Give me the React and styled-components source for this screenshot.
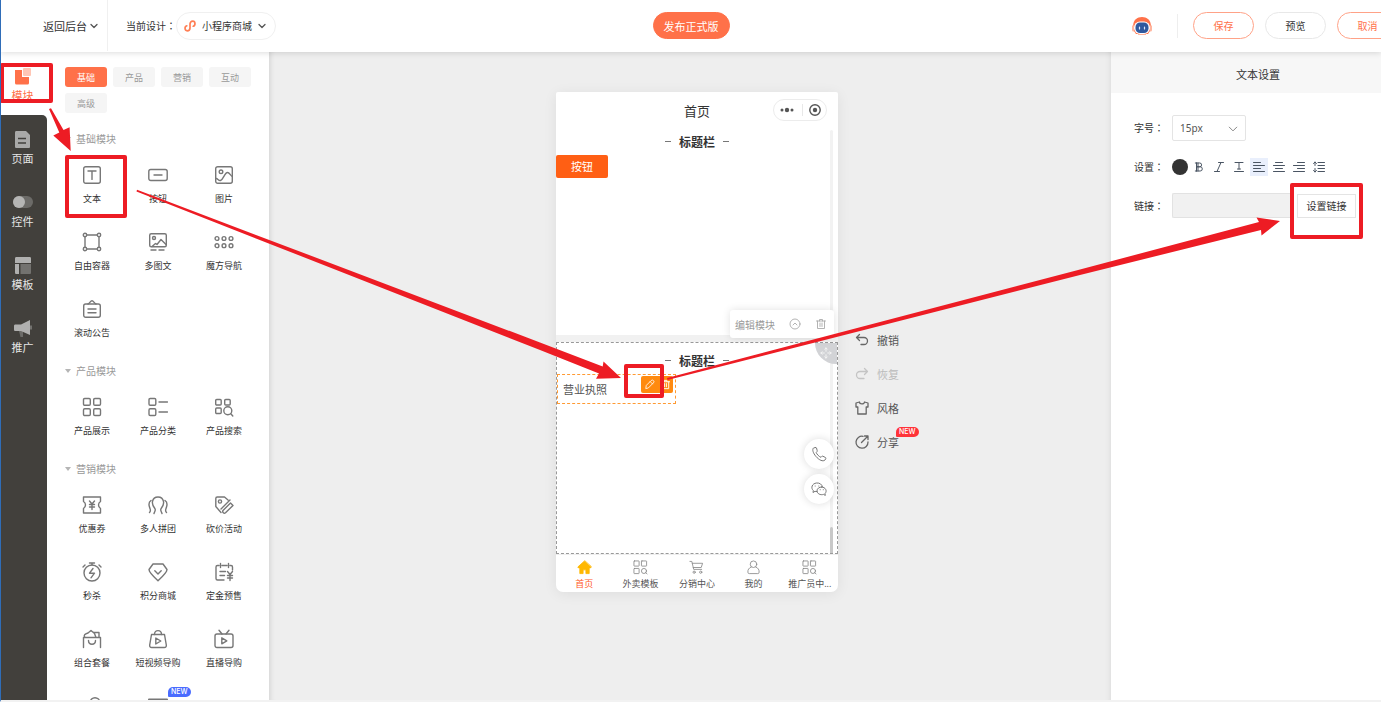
import React from "react";
import styled, { createGlobalStyle, css } from "styled-components";

const ACCENT = "#ff7149";
const MARK = "#ed1c24";

const Global = createGlobalStyle`
  *, *::before, *::after { box-sizing: border-box; }
  html, body { margin: 0; padding: 0; }
  body {
    font-family: "Noto Sans", "Noto Sans CJK SC", sans-serif;
    font-size: 10px;
    color: #333;
    overflow: hidden;
  }
  button, input, select { font: inherit; color: inherit; margin: 0; }
  button { padding: 0; border: 0; background: none; cursor: pointer; white-space: nowrap; }
  a { color: inherit; text-decoration: none; }
  svg { display: block; flex: none; }
`;

/* ---------- page frame ---------- */

const Page = styled.div`
  position: relative;
  display: flex;
  flex-direction: column;
  height: 100vh;
  overflow: hidden;
  border-left: 1px solid #2f6db8;
  border-bottom: 2px solid #f2f2f2;
  background: #fff;
`;

const Header = styled.header`
  position: relative;
  z-index: 2;
  flex: none;
  display: grid;
  grid-template-columns: 1fr auto 1fr;
  align-items: center;
  height: 52px;
  padding-bottom: 1px;
  background: #fff;
  box-shadow: 0 1px 6px rgba(0, 0, 0, 0.14);
`;

const HeaderLeft = styled.div`
  display: flex;
  align-items: center;
  height: 51px;
`;

const BackLink = styled.a`
  display: flex;
  align-items: center;
  gap: 3px;
  height: 100%;
  padding: 0 9px 0 42px;
  border-right: 1px solid #f0f0f0;
  font-size: 11px;
`;

const DesignLabel = styled.span`
  padding-left: 18px;
`;

const Colon = styled.span`
  font-family: "Noto Sans CJK TC", sans-serif;
`;

const DesignPill = styled.button`
  display: flex;
  align-items: center;
  gap: 6px;
  height: 28px;
  padding: 0 9px 0 7px;
  border: 1px solid #f0f0f0;
  border-radius: 14px;
`;

const PillButton = styled.button`
  flex: none;
  width: ${(p) => p.$width}px;
  height: 27px;
  border-radius: 14px;
  border: 1px solid #e8e8e8;
  background: #fff;
  ${(p) =>
    p.$tone === "outline" &&
    css`
      border-color: #ffa287;
      color: ${ACCENT};
    `}
  ${(p) =>
    p.$tone === "solid" &&
    css`
      border-color: ${ACCENT};
      background: ${ACCENT};
      color: #fff;
      font-size: 11px;
    `}
`;

const HeaderRight = styled.div`
  display: flex;
  align-items: center;
  justify-content: flex-end;
  gap: 11px;
  margin-right: -17px;
`;

const Divider = styled.span`
  width: 1px;
  height: 24px;
  margin: 0 4px 0 14px;
  background: #eee;
`;

const Body = styled.div`
  flex: 1;
  min-height: 0;
  display: flex;
`;

/* ---------- left rail ---------- */

const Rail = styled.nav`
  flex: none;
  width: 46px;
  display: flex;
  flex-direction: column;
  background: #fff;
`;

const RailRest = styled.div`
  flex: 1;
  background: #42403c;
  border-top-right-radius: 5px;
`;

const RailButton = styled.button`
  display: flex;
  flex-direction: column;
  align-items: center;
  gap: 3px;
  width: 43px;
  height: 63px;
  padding-top: 15px;
  font-size: 11px;
  line-height: 16px;
  color: ${(p) => (p.$active ? ACCENT : "#e6e6e6")};
`;

/* ---------- module panel ---------- */

const ModulePanel = styled.aside`
  flex: none;
  width: 222px;
  overflow: hidden;
  padding: 15px 12px 0;
  background: #fff;
`;

const Tabs = styled.div`
  display: flex;
  flex-wrap: wrap;
  gap: 6px;
  padding: 0 0 0 6px;
  margin-bottom: 11px;
`;

const Tab = styled.button`
  width: 42px;
  height: 20px;
  border-radius: 3px;
  font-size: 9px;
  color: ${(p) => (p.$active ? "#fff" : "#999")};
  background: ${(p) => (p.$active ? ACCENT : "#f5f5f5")};
`;

const GroupTitle = styled.h2`
  display: flex;
  align-items: center;
  gap: 5px;
  height: 31px;
  margin: 0;
  padding: 0 0 2px 6px;
  font-size: 10px;
  font-weight: 400;
  color: #999;
`;

const Caret = styled.span`
  border: 3px solid transparent;
  border-top: 4px solid #b5b5b5;
  border-bottom: 0;
`;

const ModuleGrid = styled.div`
  display: grid;
  grid-template-columns: repeat(3, 66px);
`;

const ModuleButton = styled.button`
  position: relative;
  display: flex;
  flex-direction: column;
  align-items: center;
  gap: 7px;
  height: 67px;
  padding-top: 10px;
  font-size: 9px;
  line-height: 14px;
  color: #333;
`;

const NewBadge = styled.span`
  position: absolute;
  top: ${(p) => p.$top}px;
  left: ${(p) => p.$left}px;
  height: 10px;
  padding: 0 3px;
  border-radius: 5px 5px 5px 1px;
  background: ${(p) => p.$color};
  color: #fff;
  font-family: Inter, sans-serif;
  font-size: 7px;
  font-weight: 500;
  line-height: 10px;
`;

/* ---------- canvas ---------- */

const Canvas = styled.main`
  flex: 1;
  min-width: 0;
  display: grid;
  grid-template-columns: 1fr 282px 1fr;
  align-items: start;
  padding: 40px 0 0 14px;
  background: #eee;
  box-shadow: inset 6px 0 6px -6px rgba(0, 0, 0, 0.16), inset -6px 0 6px -6px rgba(0, 0, 0, 0.1);
`;

const Phone = styled.section`
  position: relative;
  grid-column: 2;
  display: flex;
  flex-direction: column;
  border-radius: 2px 2px 7px 7px;
  background: #fff;
  box-shadow: 0 2px 14px rgba(0, 0, 0, 0.07);
`;

const PhoneBar = styled.div`
  display: grid;
  grid-template-columns: 1fr auto 1fr;
  align-items: center;
  height: 38px;
  padding: 0 11px 2px;
`;

const PhoneTitle = styled.h1`
  grid-column: 2;
  margin: 0;
  font-size: 13px;
  font-weight: 400;
`;

const Capsule = styled.div`
  justify-self: end;
  display: flex;
  align-items: center;
  justify-content: space-between;
  width: 54px;
  height: 22px;
  padding: 0 5px;
  border: 1px solid #ececec;
  border-radius: 11px;
`;

const CapsuleLine = styled.span`
  width: 1px;
  height: 12px;
  background: #e8e8e8;
`;

const Block = styled.div`
  position: relative;
  height: ${(p) => p.$height}px;
  ${(p) =>
    p.$selected &&
    css`
      padding-top: 6px;
      border: 1px dashed #999;
    `}
`;

const BlockGap = styled.div`
  height: 7px;
  background: #f1f1f1;
`;

const TitleRow = styled.h3`
  display: flex;
  align-items: center;
  justify-content: center;
  gap: 8px;
  height: 25px;
  margin: 0;
  padding-bottom: 2px;
  font-size: 12px;
  font-weight: 600;
  &::before,
  &::after {
    content: "";
    width: 6px;
    height: 1px;
    background: #777;
  }
`;

const DemoButton = styled.button`
  display: block;
  width: 52px;
  height: 23px;
  padding-bottom: 2px;
  border-radius: 2px;
  background: #ff5f14;
  color: #fff;
  font-size: 11px;
`;

const TextBox = styled.div`
  display: flex;
  align-items: flex-start;
  justify-content: space-between;
  width: 119px;
  height: 30px;
  padding: 1px 2px 0 5px;
  border: 1px dashed #ff9a33;
  font-size: 11px;
  line-height: 28px;
  color: #555;
`;

const TextTools = styled.div`
  display: flex;
  border-radius: 2px;
  background: #ff8a0f;
`;

const TextTool = styled.button`
  display: grid;
  place-items: center;
  width: 16px;
  height: 17px;
  color: #fff;
`;

const EditBar = styled.div`
  position: absolute;
  z-index: 1;
  top: 218px;
  right: 4px;
  display: flex;
  align-items: center;
  gap: 14px;
  height: 28px;
  padding: 0 7px 0 5px;
  border-radius: 3px;
  background: #fff;
  color: #999;
  box-shadow: 0 0 8px rgba(0, 0, 0, 0.12);
`;

const MoveHandle = styled.span`
  position: absolute;
  top: 0;
  right: 0;
  display: grid;
  place-items: center;
  width: 22px;
  height: 21px;
  padding-bottom: 2px;
  border-bottom-left-radius: 21px;
  background: #d2d3d6;
`;

const ScrollTrack = styled.span`
  position: absolute;
  top: 38px;
  bottom: 38px;
  right: 5px;
  width: 3px;
  border-radius: 2px;
  background: #f2f2f2;
  &::after {
    content: "";
    position: absolute;
    inset: auto 0 0 0;
    height: 27px;
    border-radius: 2px;
    background: #c8c8c8;
  }
`;

const FloatStack = styled.div`
  position: absolute;
  top: 347px;
  right: 4px;
  display: flex;
  flex-direction: column;
  gap: 5px;
`;

const FloatButton = styled.button`
  display: grid;
  place-items: center;
  width: 30px;
  height: 30px;
  border-radius: 50%;
  background: #fff;
  box-shadow: 0 0 8px rgba(0, 0, 0, 0.14);
`;

const TabBar = styled.nav`
  display: grid;
  grid-template-columns: repeat(5, 1fr);
  height: 38px;
  border-top: 1px solid #eee;
`;

const TabBarItem = styled.a`
  display: flex;
  flex-direction: column;
  align-items: center;
  gap: 2px;
  padding-top: 5px;
  font-size: 9px;
  line-height: 14px;
  white-space: nowrap;
  color: ${(p) => (p.$active ? "#ff5a1f" : "#555")};
`;

const ToolList = styled.div`
  display: flex;
  flex-direction: column;
  align-items: flex-start;
  gap: 10px;
  padding: 236px 0 0 17px;
`;

const ToolButton = styled.button`
  position: relative;
  display: flex;
  align-items: center;
  gap: 8px;
  height: 24px;
  font-size: 11px;
  color: ${(p) => (p.disabled ? "#bbb" : "#555")};
`;

/* ---------- settings ---------- */

const Settings = styled.aside`
  flex: none;
  width: 270px;
  background: #fff;
`;

const SettingsTitle = styled.h2`
  display: flex;
  align-items: center;
  justify-content: center;
  height: 41px;
  margin: 0;
  padding: 2px 0 0 24px;
  background: #f7f7f7;
  font-size: 11px;
  font-weight: 400;
`;

const SettingsForm = styled.form`
  display: flex;
  flex-direction: column;
  gap: 14px;
  padding: 22px 0 0 23px;
`;

const Field = styled.div`
  display: flex;
  align-items: center;
  height: 25px;
`;

const FieldLabel = styled.label`
  flex: none;
  width: 38px;
`;

const SelectWrap = styled.div`
  position: relative;
  width: 74px;
  height: 26px;
  svg {
    position: absolute;
    top: 9px;
    right: 8px;
    pointer-events: none;
  }
`;

const SizeSelect = styled.select`
  appearance: none;
  width: 100%;
  height: 100%;
  padding: 0 0 0 7px;
  border: 1px solid #e4e4e4;
  border-radius: 2px;
  background: #fff;
  font-size: 10px;
  color: #555;
`;

const Swatch = styled.button`
  width: 16px;
  height: 16px;
  margin-right: 2px;
  border-radius: 50%;
  background: #333;
`;

const FormatButton = styled.button`
  display: grid;
  place-items: center;
  width: 18px;
  height: 18px;
  margin-right: 2px;
  color: #4a5563;
  background: ${(p) => (p.$active ? "#e9effc" : "transparent")};
`;

const LinkInput = styled.input`
  width: 118px;
  height: 25px;
  border: 1px solid #e2e2e2;
  border-right: 0;
  border-radius: 2px 0 0 2px;
  background: #f1f1f1;
`;

const LinkButton = styled.button`
  width: 59px;
  height: 24px;
  margin-left: 7px;
  border: 1px solid #e4e4e4;
  background: #fff;
`;

const Annotations = styled.svg`
  position: absolute;
  z-index: 3;
  top: 0;
  left: -1px;
  pointer-events: none;
`;

/* ---------- icons ---------- */

const Line = ({ size = 20, box = 20, width = 1.4, color = "#777", children }) => (
  <svg
    width={size}
    height={size}
    viewBox={`0 0 ${box} ${box}`}
    fill="none"
    stroke={color}
    strokeWidth={width}
    strokeLinecap="round"
    strokeLinejoin="round"
    aria-hidden="true"
  >
    {children}
  </svg>
);

const Chevron = ({ size = 8, color = "#555", width = 1.3 }) => (
  <Line size={size} box={8} width={width} color={color}>
    <path d="M1 2.5 4 5.5 7 2.5" />
  </Line>
);

const moduleIcons = {
  text: (
    <>
      <rect x="1.7" y="1.7" width="16.6" height="16.6" rx="2" />
      <path d="M6 6h8M10 6v8.4" />
    </>
  ),
  button: (
    <>
      <rect x="0.8" y="4.5" width="18.4" height="11" rx="2" />
      <path d="M6 10h8" />
    </>
  ),
  image: (
    <>
      <rect x="1.7" y="1.7" width="16.6" height="16.6" rx="2" />
      <circle cx="7" cy="6.8" r="1.8" />
      <path d="M2 13.500c1.500-.500 2.500 2.500 4.500 2 3-.800 4-8 7-8 2 0 3 3 4.800 4" />
    </>
  ),
  container: (
    <>
      <path d="M4.800 3h10.400M4.800 17h10.400M3 4.800v10.400M17 4.800v10.400" />
      <circle cx="3" cy="3" r="1.700" />
      <circle cx="17" cy="3" r="1.700" />
      <circle cx="3" cy="17" r="1.700" />
      <circle cx="17" cy="17" r="1.700" />
    </>
  ),
  multi: (
    <>
      <rect x="1.700" y="1.700" width="16.600" height="13" rx="1.500" />
      <circle cx="6" cy="6" r="1.500" />
      <path d="M4 14.500 7.500 11.500 9 12.500 13 7.500 18 12.500M3 18h5M11 18h5" />
    </>
  ),
  dots: (
    <>
      {[3, 10, 17].map((x) => (
        <React.Fragment key={x}>
          <circle cx={x} cy="6.500" r="1.900" />
          <circle cx={x} cy="13.700" r="1.900" />
        </React.Fragment>
      ))}
    </>
  ),
  notice: (
    <>
      <rect x="1.700" y="5" width="16.600" height="13.300" rx="2" />
      <path d="M6 5c1.500-.500 2.500-3.300 4-3.300S12.500 4.500 14 5M6 10h8M6 13.700h8" />
    </>
  ),
  grid: (
    <>
      <rect x="1.500" y="1.500" width="6.800" height="6.800" rx="1.200" />
      <rect x="11.700" y="1.500" width="6.800" height="6.800" rx="1.200" />
      <rect x="1.500" y="11.700" width="6.800" height="6.800" rx="1.200" />
      <rect x="11.700" y="11.700" width="6.800" height="6.800" rx="1.200" />
    </>
  ),
  list: (
    <>
      <rect x="1" y="1.500" width="6.800" height="6.800" rx="1.200" />
      <rect x="1" y="11.700" width="6.800" height="6.800" rx="1.200" />
      <path d="M11 5h8.500M11 15h8.500" />
    </>
  ),
  search: (
    <>
      <rect x="1.700" y="2.500" width="5.500" height="5.500" rx="1" />
      <rect x="10.700" y="2.500" width="5.500" height="5.500" rx="1" />
      <rect x="1.700" y="11" width="5.500" height="5.500" rx="1" />
      <circle cx="13.800" cy="13.800" r="4" />
      <path d="M16.800 16.800 18.800 19" />
    </>
  ),
  coupon: (
    <>
      <path d="M1.500 2h17v4.500c-1.500 1-2 2-2 3.500s.500 2.500 2 3.500V18h-17v-4.500c1.500-1 2-2 2-3.500s-.500-2.500-2-3.500Z" />
      <path d="m7.500 6 2.500 3 2.500-3M10 9v5.500M7.500 9.500h5M7.500 12h5" />
    </>
  ),
  group: (
    <>
      <path d="M6 18.500c.500-2 2-2.800 1-4.800C4.800 11 4 9 4.500 6.500a5.600 5.600 0 0 1 11 0c.500 2.500-.300 4.500-2.500 7.200-1 2 .500 2.800 1 4.800" />
      <path d="M1.500 17.500c2-2 .500-3.500 0-5.500-1-3 0-5.500 1.500-6.500M18.500 17.500c-2-2-.500-3.500 0-5.500 1-3 0-5.500-1.500-6.500" />
    </>
  ),
  bargain: (
    <>
      <path d="M7 17.500 1.800 11.500V3.500c0-1 .700-1.500 1.500-1.500h7.200L14 5M7 14 16 5" />
      <circle cx="6" cy="6.500" r="1.600" />
      <path d="M9 15.500c-1 1.500 1 3.500 2.500 2.200L19 10.500 16.500 8Z" />
    </>
  ),
  flash: (
    <>
      <circle cx="10" cy="11" r="8" />
      <path d="M7.500 1h5M10 1v2M1 5l2-2M19 5l-2-2M11 6.500 7.500 11.200h5L9 15.800" />
    </>
  ),
  points: (
    <>
      <path d="M5 2h10l4 5.500c0 3-6 8.500-9 11.300C7 16 1 10.500 1 7.500Z" />
      <path d="M6.800 8.800 10 12l3.200-3.200" />
    </>
  ),
  deposit: (
    <>
      <path d="M10 18H3.500C2.500 18 2 17.500 2 16.500V5c0-1 .500-1.500 1.500-1.500H5M8 3.500h5M16 3.500h1c1 0 1.500.500 1.500 1.500v3M6.500 1.500v4M14.500 1.500v4M6 9.500h5.500M6 13.500h4.500" />
      <path d="m13.500 9.500 2.500 3 2.500-3M16 12.500v6M13.500 13.500h5M13.500 16h5" />
    </>
  ),
  combo: (
    <>
      <path d="M1.500 18.500v-10h17v10M3 8.500C1 6 3 5 6 4l3-2.500 3.500 3L14 8.500M11.500 3.500H17v5" />
      <path d="M6.500 11.500c0 5 7 5 7 0" />
    </>
  ),
  video: (
    <>
      <path d="M3.500 5.500h13L18.300 16c.200 1.500-.500 2.500-2 2.500H3.700c-1.500 0-2.200-1-2-2.500Z" />
      <path d="M6.500 5.500C6.500.300 13.500.300 13.500 5.500M7.800 9v6l5-3Z" />
    </>
  ),
  live: (
    <>
      <rect x="1" y="5" width="18" height="13.500" rx="2" />
      <path d="M5 1.200 8 5M15 1.200 12 5M7.800 8.800v6l5-3Z" />
    </>
  ),
  person: <circle cx="13" cy="6.500" r="4.800" />,
  card: <path d="M1 3.500h18v14H1Z" strokeWidth="2" />,
};

const groups = [
  {
    title: "基础模块",
    items: [
      ["text", "文本"],
      ["button", "按钮"],
      ["image", "图片"],
      ["container", "自由容器"],
      ["multi", "多图文"],
      ["dots", "魔方导航"],
      ["notice", "滚动公告"],
    ],
  },
  {
    title: "产品模块",
    items: [
      ["grid", "产品展示"],
      ["list", "产品分类"],
      ["search", "产品搜索"],
    ],
  },
  {
    title: "营销模块",
    items: [
      ["coupon", "优惠券"],
      ["group", "多人拼团"],
      ["bargain", "砍价活动"],
      ["flash", "秒杀"],
      ["points", "积分商城"],
      ["deposit", "定金预售"],
      ["combo", "组合套餐"],
      ["video", "短视频导购"],
      ["live", "直播导购"],
      ["person", ""],
      ["card", "", true],
    ],
  },
];

const railIcons = {
  模块: (
    <>
      <path d="M1 3h7v7h7v6a1.500 1.500 0 0 1-1.500 1.500h-11A1.500 1.500 0 0 1 1 16Z" fill={ACCENT} />
      <rect x="9" y="1" width="8" height="8" rx="1" fill="#ffc6b5" />
    </>
  ),
  页面: (
    <>
      <path d="M1 2.500C1 1.500 1.500 1 2.500 1H12l4 4v11.500c0 1-.500 1.500-1.500 1.500h-12C1.500 18 1 17.500 1 16.500Z" fill="#a9a9a8" />
      <path d="M4 8.500h8M4 13h8" stroke="#42403c" strokeWidth="1.600" />
    </>
  ),
  控件: (
    <>
      <rect x="-1" y="3" width="20" height="12" rx="6" fill="#6c6b68" />
      <circle cx="5" cy="9" r="6" fill="#b5b5b4" />
    </>
  ),
  模板: (
    <>
      <path d="M1 2.500C1 1.500 1.500 1 2.500 1h13c1 0 1.500.500 1.500 1.500V7H1Z" fill="#b0b0af" />
      <path d="M1 8h4v10H2.500C1.500 18 1 17.500 1 16.500Z" fill="#b0b0af" />
      <path d="M6.500 8H17v8.500c0 1-.500 1.500-1.500 1.500h-9Z" fill="#73726f" />
    </>
  ),
  推广: (
    <>
      <path d="M5 12h4v6H6.500Z" fill="#6c6b68" />
      <path d="M0 7c0-1 .500-1.500 1.500-1.500H7L16 1v15l-9-4H1.500C.500 12 0 11.500 0 10.500Z" fill="#b0b0af" />
      <path d="M17 6.500v4" stroke="#73726f" strokeWidth="2" />
    </>
  ),
};

const RailItem = ({ name, active }) => (
  <RailButton $active={active}>
    <svg width="18" height="18" viewBox="0 0 18 18" fill="none" overflow="visible" aria-hidden="true">
      {railIcons[name]}
    </svg>
    {name}
  </RailButton>
);

const Robot = () => (
  <svg width="20" height="20" viewBox="0 0 20 20" aria-label="客服" role="img">
    <path d="M2 15C-1 6 4 1 10 1s11 5 8 14l-2 3H4Z" fill="#ff7149" />
    <path d="M0 9.500h2v6H1.500A1.500 1.500 0 0 1 0 14ZM20 9.500h-2v6h.500A1.500 1.500 0 0 0 20 14Z" fill="#ffb59e" />
    <rect x="2" y="5.500" width="16" height="12.500" rx="6" fill="#fff" />
    <rect x="3.500" y="6.500" width="13" height="10.500" rx="4.500" fill="#30599e" />
    <path d="M7.500 11v2M12.500 11v2" stroke="#dfe9fb" strokeWidth="1.200" strokeLinecap="round" />
    <path d="M6 18.500h8" stroke="#ffb59e" />
  </svg>
);

const MiniProgramLogo = () => (
  <Line size={12} box={12} width={1.7} color="#ff7f55">
    <path d="M2.800 5.800C.300 6.500.500 10.800 3.200 10.800 5 10.800 6 9.500 6 8V4C6 2.500 7 1.200 8.800 1.200c2.700 0 2.900 4.300.400 5" />
  </Line>
);

const Trash = ({ size, color, width = 1 }) => (
  <Line size={size} box={12} width={width} color={color}>
    <path d="M1.500 3h9M4.500 3V1.500h3V3M2.500 3v7.500h7V3M5 5v3.500M7 5v3.500" />
  </Line>
);

const tabBarIcons = {
  home: <path d="M8 1 .800 7.500l.800.900H3v6.100h3.500v-4h3v4H13V8.400h1.400l.800-.900Z" fill="#ffb800" stroke="#ffb800" />,
  blocks: (
    <>
      <rect x="1" y="1" width="5.500" height="5.500" rx=".5" />
      <rect x="9" y="1" width="5.500" height="5.500" rx=".5" />
      <rect x="1" y="9" width="5.500" height="5.500" rx=".5" />
      <circle cx="11.700" cy="11.700" r="2.700" />
      <path d="m13.500 13.500 1.500 1.300" />
    </>
  ),
  cart: (
    <>
      <path d="M1 1.500h2L5 10h8.500M3.500 3.500h11L13 8H4.500" />
      <circle cx="5.500" cy="13" r="1.200" />
      <circle cx="12.500" cy="13" r="1.200" />
    </>
  ),
  user: (
    <>
      <circle cx="8" cy="4.500" r="3.500" />
      <path d="M5.500 7.500C3 8.500 1.800 10.500 2 13c0 1 .500 1.500 1.500 1.500h9c1 0 1.500-.500 1.500-1.500.200-2.500-1-4.500-3.500-5.500" />
    </>
  ),
};

const tabBarItems = [
  ["home", "首页"],
  ["blocks", "外卖模板"],
  ["cart", "分销中心"],
  ["user", "我的"],
  ["blocks", "推广员中..."],
];

const toolItems = [
  { name: "撤销", icon: <path d="M4.500 1.500 1.500 4.500l3 3M1.500 4.500H9a3.500 3.500 0 0 1 0 7H6" /> },
  { name: "恢复", disabled: true, icon: <path d="m9.500 1.500 3 3-3 3M12.500 4.500H5a3.500 3.500 0 0 0 0 7h4" /> },
  {
    name: "风格",
    icon: <path d="M4.500 1 1 2v4h1.800v7h8.400V6H13V2L9.500 1C9.500 3.500 4.500 3.500 4.500 1Z" />,
  },
  {
    name: "分享",
    isNew: true,
    icon: <path d="M8 1.300A6 6 0 1 0 13 7M6.500 7.500 13 1M9.500 1H13v3.500" />,
  },
];

const formats = [
  { name: "加粗", d: "M3.500 2v8M3.500 2h3.200a1.900 1.900 0 0 1 0 3.800H3.500M3.500 5.800h3.700a2.100 2.100 0 0 1 0 4.200H3.500M2.300 2h1.200M2.300 10h1.200M5 2v8" },
  { name: "斜体", d: "M5.500 1.500h5M1.500 10.500h5M8 1.500l-4 9" },
  { name: "下划线", d: "M2 1.500h8M6 1.500v6.500M4.500 8h3M1.500 10.500h9" },
  { name: "左对齐", active: true, d: "M.500 1.500h7M.500 4.500h11M.500 7.500h7M.500 10.500h11" },
  { name: "居中", d: "M2.500 1.500h7M.500 4.500h11M2.500 7.500h7M.500 10.500h11" },
  { name: "右对齐", d: "M4.500 1.500h7M.500 4.500h11M4.500 7.500h7M.500 10.500h11" },
  { name: "行距", d: "M5 1.500h6.500M5 4.500h6.500M5 7.500h6.500M5 10.500h6.500M2 1v3.500M2 7.500V11M.500 2.500 2 1l1.500 1.500M.500 9.500 2 11l1.500-1.500" },
];

export default function App() {
  return (
    <Page>
      <Global />
      <Header>
        <HeaderLeft>
          <BackLink href="#">
            返回后台
            <Chevron />
          </BackLink>
          <DesignLabel id="design-label">
            当前设计<Colon>：</Colon>
          </DesignLabel>
          <DesignPill aria-labelledby="design-label">
            <MiniProgramLogo />
            小程序商城
            <Chevron />
          </DesignPill>
        </HeaderLeft>
        <PillButton $tone="solid" $width={77}>
          发布正式版
        </PillButton>
        <HeaderRight>
          <Robot />
          <Divider />
          <PillButton $tone="outline" $width={61}>
            保存
          </PillButton>
          <PillButton $width={61}>预览</PillButton>
          <PillButton $tone="outline" $width={61}>
            取消
          </PillButton>
        </HeaderRight>
      </Header>

      <Body>
        <Rail>
          <RailItem name="模块" active />
          <RailRest>
            {["页面", "控件", "模板", "推广"].map((n) => (
              <RailItem key={n} name={n} />
            ))}
          </RailRest>
        </Rail>

        <ModulePanel>
          <Tabs>
            {["基础", "产品", "营销", "互动", "高级"].map((t, i) => (
              <Tab key={t} $active={i === 0}>
                {t}
              </Tab>
            ))}
          </Tabs>
          {groups.map((g) => (
            <section key={g.title}>
              <GroupTitle>
                <Caret />
                {g.title}
              </GroupTitle>
              <ModuleGrid>
                {g.items.map(([icon, label, isNew]) => (
                  <ModuleButton key={icon}>
                    <Line>{moduleIcons[icon]}</Line>
                    {label}
                    {isNew && (
                      <NewBadge $top={1} $left={43} $color="#4a6cff">
                        NEW
                      </NewBadge>
                    )}
                  </ModuleButton>
                ))}
              </ModuleGrid>
            </section>
          ))}
        </ModulePanel>

        <Canvas>
          <Phone>
            <PhoneBar>
              <PhoneTitle>首页</PhoneTitle>
              <Capsule>
                <svg width="16" height="8" viewBox="0 0 16 8" fill="#555" aria-hidden="true">
                  <circle cx="3" cy="4" r="1.500" />
                  <circle cx="8" cy="4" r="2.200" />
                  <circle cx="13" cy="4" r="1.500" />
                </svg>
                <CapsuleLine />
                <svg width="12" height="12" viewBox="0 0 12 12" aria-hidden="true">
                  <circle cx="6" cy="6" r="5.200" fill="none" stroke="#555" strokeWidth="1.400" />
                  <circle cx="6" cy="6" r="2.200" fill="#555" />
                </svg>
              </Capsule>
            </PhoneBar>
            <ScrollTrack />
            <Block $height={205}>
              <TitleRow>标题栏</TitleRow>
              <DemoButton>按钮</DemoButton>
            </Block>
            <BlockGap />
            <Block $height={212} $selected>
              <MoveHandle>
                <Line size={12} box={14} width={1.1} color="#f4f4f4">
                  <path d="M7 1v4M7 9v4M1 7h4M9 7h4M5.500 2.500 7 1l1.500 1.500M5.500 11.500 7 13l1.500-1.500M2.500 5.500 1 7l1.500 1.500M11.500 5.500 13 7l-1.500 1.500" />
                </Line>
              </MoveHandle>
              <TitleRow>标题栏</TitleRow>
              <TextBox>
                营业执照
                <TextTools>
                  <TextTool aria-label="编辑">
                    <Line size={11} box={12} width={0.9} color="#fff">
                      <path d="M2 10 2.500 7 7.800 1.700a1.400 1.400 0 0 1 2.500 2.500L5 9.500ZM6.700 2.800l2.500 2.500" />
                    </Line>
                  </TextTool>
                  <TextTool aria-label="删除">
                    <Trash size={11} color="#fff" />
                  </TextTool>
                </TextTools>
              </TextBox>
            </Block>
            <EditBar>
              编辑模块
              <Line size={12} box={12} width={0.9} color="#aaa">
                <circle cx="6" cy="6" r="5" />
                <path d="M4 7 6 5l2 2" />
              </Line>
              <Trash size={12} color="#aaa" width={0.9} />
            </EditBar>
            <FloatStack>
              <FloatButton aria-label="电话">
                <Line size={16} box={16} width={1} color="#777">
                  <path d="M4.500 1.500 2.500 2C1 3.500 2 7 5 10.500s7 5.500 9 3.500l.800-1.500c.200-.500 0-.800-.300-1l-2.700-1.300c-.500-.200-.800 0-1.100.300l-.700.800C8.500 11 5.500 8 5.200 6.500L6 5.600c.300-.300.300-.700.200-1L5.500 2c-.200-.500-.500-.700-1-.500Z" />
                </Line>
              </FloatButton>
              <FloatButton aria-label="微信">
                <Line size={16} box={16} width={1} color="#777">
                  <path d="M6 10.500c-.800.200-1.500 0-2-.200L2 11.500l.300-2C-.500 7 1 2.500 5.500 2c3-.300 5.500 1.200 6 4" />
                  <path d="M10.700 6c-2.500 0-4.700 1.500-4.700 3.900 0 2.800 3.500 4.500 6.500 3.500l1.800 1-.300-1.800C16.500 10 14.500 6 10.700 6ZM4.200 5v.100M7.800 5v.100M9.200 8.700v.100M12.300 8.700v.100" />
                </Line>
              </FloatButton>
            </FloatStack>
            <TabBar>
              {tabBarItems.map(([icon, label], i) => (
                <TabBarItem href="#" key={label} $active={i === 0}>
                  <Line size={15} box={16} width={0.9} color="#888">
                    {tabBarIcons[icon]}
                  </Line>
                  {label}
                </TabBarItem>
              ))}
            </TabBar>
          </Phone>

          <ToolList>
            {toolItems.map((t) => (
              <ToolButton key={t.name} disabled={t.disabled}>
                <Line size={14} box={14} width={1.3} color={t.disabled ? "#c4c4c4" : "#666"}>
                  {t.icon}
                </Line>
                {t.name}
                {t.isNew && (
                  <NewBadge $top={-3} $left={41} $color="#ff3338">
                    NEW
                  </NewBadge>
                )}
              </ToolButton>
            ))}
          </ToolList>
        </Canvas>

        <Settings>
          <SettingsTitle>文本设置</SettingsTitle>
          <SettingsForm onSubmit={(e) => e.preventDefault()}>
            <Field>
              <FieldLabel htmlFor="size">
                字号<Colon>：</Colon>
              </FieldLabel>
              <SelectWrap>
                <SizeSelect id="size" defaultValue="15px">
                  <option>15px</option>
                </SizeSelect>
                <Chevron size={10} color="#888" width={0.8} />
              </SelectWrap>
            </Field>
            <Field>
              <FieldLabel htmlFor="color">
                设置<Colon>：</Colon>
              </FieldLabel>
              <Swatch id="color" type="button" aria-label="颜色" />
              {formats.map((f) => (
                <FormatButton key={f.name} type="button" aria-label={f.name} $active={f.active}>
                  <Line size={12} box={12} width={1} color="currentColor">
                    <path d={f.d} />
                  </Line>
                </FormatButton>
              ))}
            </Field>
            <Field>
              <FieldLabel htmlFor="link">
                链接<Colon>：</Colon>
              </FieldLabel>
              <LinkInput id="link" readOnly />
              <LinkButton type="button">设置链接</LinkButton>
            </Field>
          </SettingsForm>
        </Settings>
      </Body>

      <Annotations width="1381" height="702" viewBox="0 0 1381 702" fill="none" aria-hidden="true">
        <g stroke={MARK} strokeWidth="4" strokeLinejoin="round">
          <rect x="2" y="65" width="49" height="36" />
          <rect x="67" y="157" width="58" height="59" />
          <rect x="626" y="366" width="36" height="30" />
          <rect x="1292" y="185" width="69" height="52" />
        </g>
        <g fill={MARK}>
          <path d="M49 109 51 108.300 63.500 130 69.600 127.300 70.700 151 53.300 135.500 59.300 132.500Z" />
          <path d="M136.500 191.500 137 189.800 540 342.500 602.700 366.500 603.500 361.500 621 378 596 378.800 599 373.500 540 350 Z" />
          <path d="M667 378 1080 269.500 1259 222 1256.500 217.500 1280 221 1261.500 235.500 1261 230 1080 275 667.500 380Z" />
        </g>
      </Annotations>
    </Page>
  );
}
